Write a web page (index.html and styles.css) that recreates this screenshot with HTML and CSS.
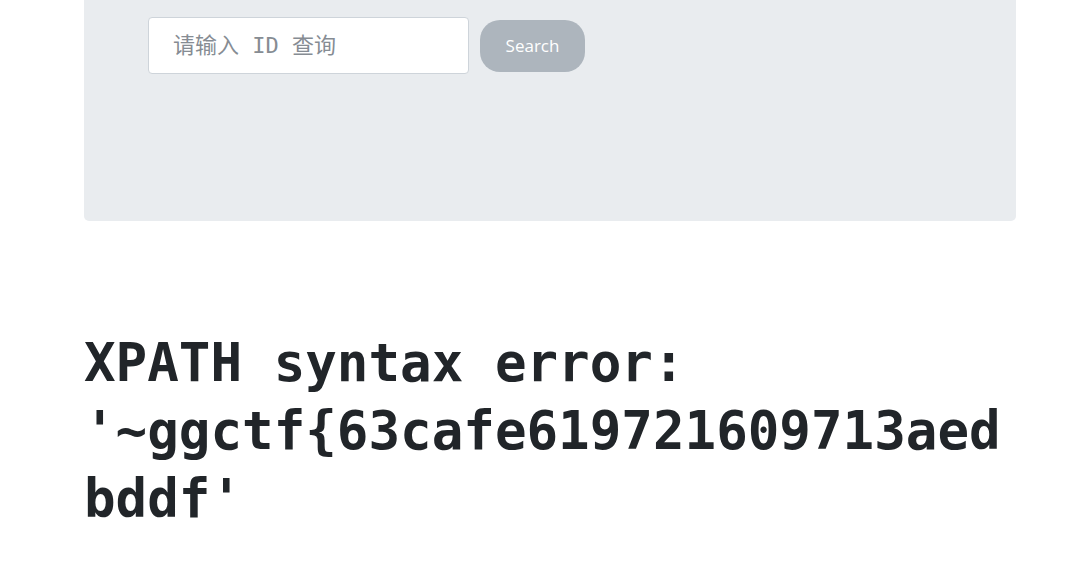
FILE: index.html
```html
<!DOCTYPE html>
<html lang="zh">
<head>
<meta charset="utf-8">
<title>Search</title>
<link rel="stylesheet" href="styles.css">
</head>
<body>
<div class="container">
  <div class="panel">
    <form class="search-row">
      <input class="search-input" type="text" placeholder="请输入 ID 查询">
      <button class="search-btn" type="button">Search</button>
    </form>
  </div>
  <h1 class="result">XPATH syntax error: '~ggctf{63cafe619721609713aedbddf'</h1>
</div>
</body>
</html>
```
FILE: styles.css
```css
html, body {
  margin: 0;
  padding: 0;
  background: #ffffff;
}

.container {
  margin-left: 84px;
  width: 932px;
}

.panel {
  background: #e9ecef;
  border-radius: 0 0 5px 5px;
  padding: 17px 64px 147px;
}

.search-row {
  display: flex;
  align-items: center;
  gap: 11px;
  margin: 0;
}

.search-input {
  box-sizing: border-box;
  width: 321px;
  height: 57px;
  margin: 0;
  padding: 0 0 0 24px;
  border: 1px solid #ced4da;
  border-radius: 4px;
  background: #ffffff;
  font-family: "DejaVu Sans Mono", "Noto Sans CJK SC", monospace;
  font-size: 22px;
  color: #495057;
  outline: none;
}

.search-input::placeholder {
  color: #868c93;
  opacity: 1;
}

.search-btn {
  box-sizing: border-box;
  width: 105px;
  height: 52px;
  margin: 0;
  padding: 0;
  border: none;
  border-radius: 20px;
  background: #adb5bd;
  color: #ffffff;
  font-family: "Open Sans", "Noto Sans", sans-serif;
  font-size: 17px;
}

.result {
  margin: 108px 0 0;
  font-family: "DejaVu Sans Mono", monospace;
  font-weight: bold;
  font-size: 52.5px;
  line-height: 68px;
  color: #212529;
  overflow-wrap: break-word;
}
```
